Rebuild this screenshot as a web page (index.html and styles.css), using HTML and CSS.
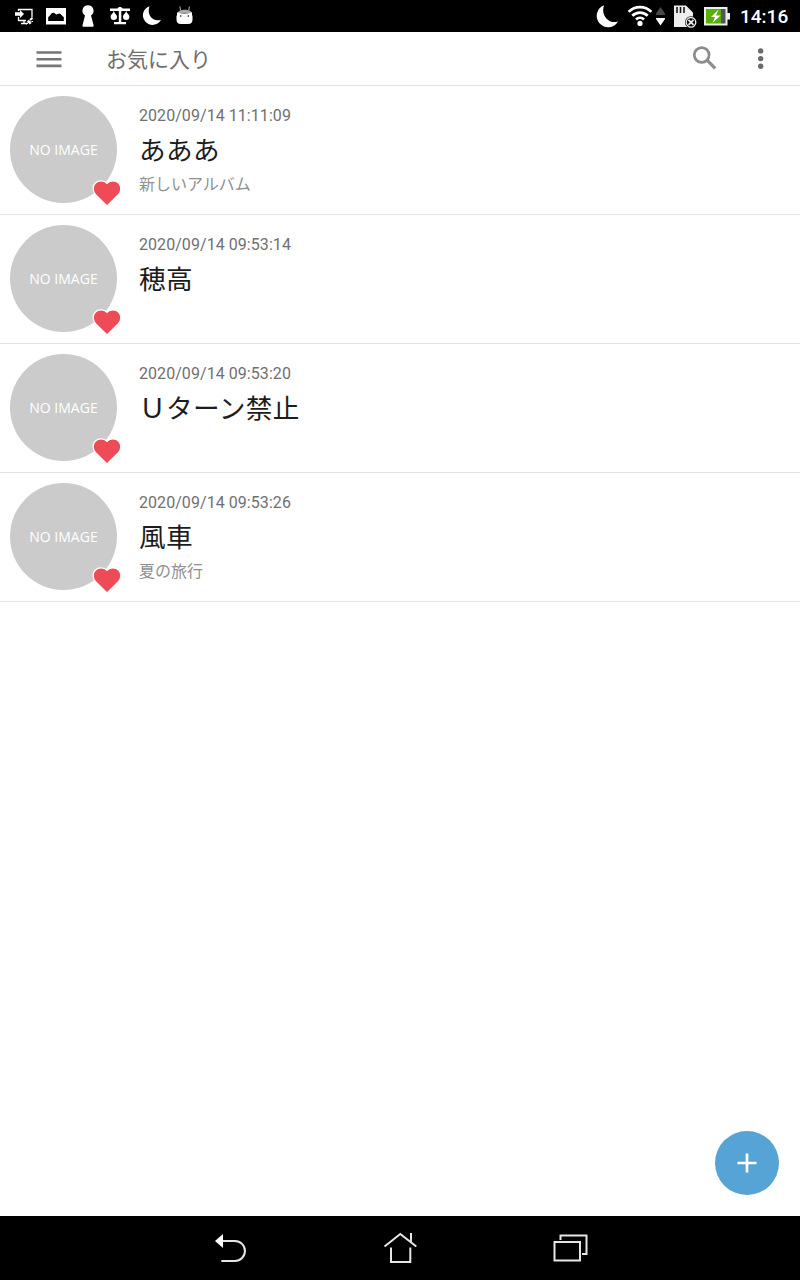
FILE: index.html
```html
<!DOCTYPE html>
<html lang="ja">
<head>
    <meta charset="UTF-8">
    <title>お気に入り</title>
    <link rel="stylesheet" href="styles.css">
</head>
<body>

    <svg class="defs" width="0" height="0">
        <symbol id="heart" viewBox="0 0 30 28">
            <path d="M15 27 L3.600 15.800 C.4 12.400 .4 7.200 3.200 4.200 C6.400 1 12 1.200 15 4.400 C18 1.200 23.600 1 26.800 4.200 C29.600 7.200 29.600 12.400 26.400 15.800 Z" fill="#ef4b57" stroke="#fff" stroke-width="1.300"/>
        </symbol>
    </svg>

    <div class="status">
        <div class="notice">
            <svg width="24" height="24" viewBox="0 0 24 24" fill="none" stroke="#fff">
                <path d="M6.500 7V5.500h13.500v8M6.500 13v3.500H14M9 19.500h6M12 17v2" stroke-width="1.300"/>
                <path d="M3 8.200h5V6l4 4-4 4v-2.200H3z" fill="#fff" stroke="none"/>
                <path d="M15.500 18.500l2-2M18 16l2.500-2M17 19.500l2-1.500" stroke-width="2.200"/>
                <path d="M14.500 20.500l1.500-1.500M19.500 17.500h1.500" stroke-width="1"/>
            </svg>
            <svg width="24" height="24" viewBox="0 0 24 24">
                <path d="M2 4h20v16.500H2z" fill="#fff"/>
                <path d="M4.200 17v-4C6 12.500 7 8.800 9.200 8.800c1.800 0 2 1.700 3.300 1.700 1 0 1.500-1 2.800-1 1.800 0 2.700 3 4.500 3.500v4z" fill="#000"/>
            </svg>
            <svg width="24" height="24" viewBox="0 0 24 24">
                <path d="M12 1.200a5.600 5.600 0 0 1 3 10.300l2.600 9.700c.2 1-.5 1.500-1.500 1.500H8c-1 0-1.700-.5-1.500-1.500L9 11.500A5.600 5.600 0 0 1 12 1.200z" fill="#fff"/>
            </svg>
            <svg width="24" height="24" viewBox="0 0 24 24" fill="#fff">
                <path d="M2 4.500h7.500c.5-2 4.500-2 5 0H22V7h-8.700v11H18v2.200H6V18h4.800V7H2z"/>
                <path d="M5.800 6.500c.5 3 3.200 4 3.200 6.300a3.200 3.200 0 0 1-6.400 0c0-2.300 2.700-3.300 3.200-6.300zM18.200 6.500c.5 3 3.200 4 3.200 6.300a3.200 3.200 0 0 1-6.400 0c0-2.300 2.700-3.300 3.200-6.300z"/>
            </svg>
            <svg width="24" height="24" viewBox="0 0 24 24">
                <path d="M9.500 2.200A9.600 9.600 0 1 0 21 15.800C12.500 18.500 6.500 10.500 9.500 2.200z" fill="#fff"/>
            </svg>
            <svg width="24" height="24" viewBox="0 0 24 24">
                <path d="M8 2.500l.5 4M17.300 2.500l-.5 4" stroke="#bbb"/>
                <path d="M5.500 9c1-4.500 13.500-4.500 14.500 0z" fill="#aaa"/>
                <path d="M5 8.500q7.500 2 15 0v2.500l.5 1v3.500q0 4.500-4.500 4.500H9q-4.500 0-4.500-4.500V12l.5-1z" fill="#fff"/>
                <circle cx="8.700" cy="12" r=".8"/>
                <circle cx="16.300" cy="12" r=".8"/>
            </svg>
        </div>
        <div class="system">
            <svg width="24" height="24" viewBox="0 0 24 24">
                <path d="M8 1.200A11.400 11.400 0 1 0 22 17.500C12.500 20.500 4.500 11 8 1.200z" fill="#fff"/>
            </svg>
            <svg class="wifi" width="26" height="24" viewBox="0 0 26 24" fill="none" stroke="#fff" stroke-width="2.700">
                <path d="M1.600 7.900a16 16 0 0 1 22.800 0M5.300 11.800a11 11 0 0 1 15.400 0M9 15.500a6 6 0 0 1 8 0"/>
                <circle cx="13" cy="19.400" r="2.600" fill="#fff" stroke="none"/>
            </svg>
            <svg class="traffic" width="9" height="24" viewBox="0 0 9 24">
                <path d="M4.500 3L9 9.500v1.500H0V9.500z" fill="#484848"/>
                <path d="M0 14h9v1l-4.500 6.500L0 15z" fill="#fff"/>
            </svg>
            <svg class="sd" width="24" height="24" viewBox="0 0 24 24">
                <path d="M1 1.500h12L20 8.500v14.500H1z" fill="#eee"/>
                <path d="M4 3v6M7.500 3v6M11 3v6" stroke="#111" stroke-width="1.500"/>
                <circle cx="18" cy="18.300" r="6" fill="#000"/>
                <circle cx="18" cy="18.300" r="4.800" fill="#000" stroke="#eee" stroke-width="1.300"/>
                <path d="M15.500 15.800l5 5M20.500 15.800l-5 5" stroke="#eee" stroke-width="1.800"/>
            </svg>
            <svg class="battery" width="26" height="24" viewBox="0 0 26 24">
                <path d="M0 3h23.500v6H26v6.500h-2.500V21.500H0z" fill="#eee"/>
                <path d="M2 5h15v14.500H2z" fill="#57b100"/>
                <path d="M17 5h4.500v14.500H17z" fill="#555"/>
                <path d="M14.500 5.500L7 13h4l-2.500 6 8-7.500h-4.500z" fill="#fff"/>
            </svg>
            <span class="clock">14:16</span>
        </div>
    </div>

    <div class="toolbar">
        <svg class="menu" width="26" height="18" viewBox="0 0 26 18">
            <path d="M.5 2.500h25M.5 9.200h25M.5 15.900h25" stroke="#777" stroke-width="2.600"/>
        </svg>
        <h1>お気に入り</h1>
        <svg class="search" width="24" height="24" viewBox="0 0 24 24" fill="none" stroke="#8c8c8c">
            <circle cx="8.700" cy="9" r="7.400" stroke-width="2.700"/>
            <path d="M14 14.200l8.200 8.200" stroke-width="3.200"/>
        </svg>
        <svg class="more" width="6" height="22" viewBox="0 0 6 22" fill="#6b6b6b">
            <circle cx="2.700" cy="2.900" r="2.700"/>
            <circle cx="2.700" cy="10.600" r="2.700"/>
            <circle cx="2.700" cy="18.300" r="2.700"/>
        </svg>
    </div>

    <ul class="list">
        <li>
            <div class="thumb">NO IMAGE<svg class="heart"><use href="#heart"/></svg></div>
            <div class="info">
                <p class="date">2020/09/14 11:11:09</p>
                <p class="name">あああ</p>
                <p class="album">新しいアルバム</p>
            </div>
        </li>
        <li>
            <div class="thumb">NO IMAGE<svg class="heart"><use href="#heart"/></svg></div>
            <div class="info">
                <p class="date">2020/09/14 09:53:14</p>
                <p class="name">穂高</p>
            </div>
        </li>
        <li>
            <div class="thumb">NO IMAGE<svg class="heart"><use href="#heart"/></svg></div>
            <div class="info">
                <p class="date">2020/09/14 09:53:20</p>
                <p class="name">Ｕターン禁止</p>
            </div>
        </li>
        <li>
            <div class="thumb">NO IMAGE<svg class="heart"><use href="#heart"/></svg></div>
            <div class="info">
                <p class="date">2020/09/14 09:53:26</p>
                <p class="name">風車</p>
                <p class="album">夏の旅行</p>
            </div>
        </li>
    </ul>

    <div class="add">
        <svg width="20" height="20" viewBox="0 0 20 20">
            <path d="M10 .5v19M.5 10h19" stroke="#fff" stroke-width="2.700"/>
        </svg>
    </div>

    <div class="nav">
        <svg width="40" height="40" viewBox="0 0 40 40">
            <path d="M11 13h14a9.950 9.950 0 0 1 0 19.900H11.300" fill="none" stroke="#e6e6e6" stroke-width="2"/>
            <path d="M5 13l8-7v14z" fill="#fff"/>
        </svg>
        <svg width="40" height="40" viewBox="0 0 40 40" fill="none" stroke="#e6e6e6" stroke-width="2">
            <path d="M4.500 18.500L20.300 6l16 12.500M31 5v9M11 19.500V34h19.300V19.500"/>
        </svg>
        <svg width="40" height="40" viewBox="0 0 40 40" fill="none" stroke="#e6e6e6" stroke-width="2">
            <path d="M4.500 14h25.500v18.500H4.500zM10.500 12V7.500h26V26H32"/>
        </svg>
    </div>

</body>
</html>
```

FILE: styles.css
```css
*{margin: 0;padding: 0;box-sizing: border-box;}
ul,li{list-style: none;}
svg{display: block;flex: none;}
.defs{position: absolute;}
body{height: 1280px; display: flex; flex-direction: column; background: #fff; font-family: Roboto, "Noto Sans CJK JP", sans-serif; overflow: hidden;}

.status{height: 32px; padding: 0 11px 0 12px; display: flex; justify-content: space-between; background: #000; color: #fff;}
.notice{display: flex; align-items: center; gap: 8px;}
.system{display: flex; align-items: center;}
.wifi{margin-left: 7px;}
.traffic{margin-left: 3px;}
.sd{margin-left: 8px;}
.battery{margin-left: 7px;}
.clock{width: 49px; margin-left: 10px; padding-top: 2px; font-size: 19px; font-weight: 500; line-height: 32px; white-space: nowrap;}

.toolbar{height: 54px; padding: 0 36px; display: flex; align-items: center; border-bottom: 1px solid #e2e2e2;}
.toolbar h1{flex: 1; margin-left: 44px; padding-top: 3px; font-size: 21px; font-weight: 400; line-height: 51px; color: #6e6e6e;}
.search{margin: -2px 41px 0 0;}

.list li{height: 129px; padding: 10px; display: flex; border-bottom: 1px solid #e2e2e2;}
.thumb{width: 107px; height: 107px; position: relative; border-radius: 50%; background: #cbcbcb; color: #fff; font: 500 14px/108px "Open Sans", sans-serif; text-align: center; white-space: nowrap;}
.heart{width: 30px; height: 28px; position: absolute; left: 82px; top: 83px;}
.info{margin-left: 22px;}
.date{padding-top: 10px; font-size: 16px; line-height: 20px; letter-spacing: .06px; color: #707070;}
.name{margin-top: 5px; font-size: 26.67px; line-height: 40px; letter-spacing: .35px; color: #1c1c1c;}
.album{margin-top: -1px; font-size: 16px; line-height: 30px; color: #909090;}

.add{width: 64px; height: 64px; margin: auto 21px 21px auto; display: flex; align-items: center; justify-content: center; border-radius: 50%; background: #56a4d6;}
.nav{height: 64px; display: flex; align-items: center; justify-content: center; gap: 130px; background: #000;}
```
